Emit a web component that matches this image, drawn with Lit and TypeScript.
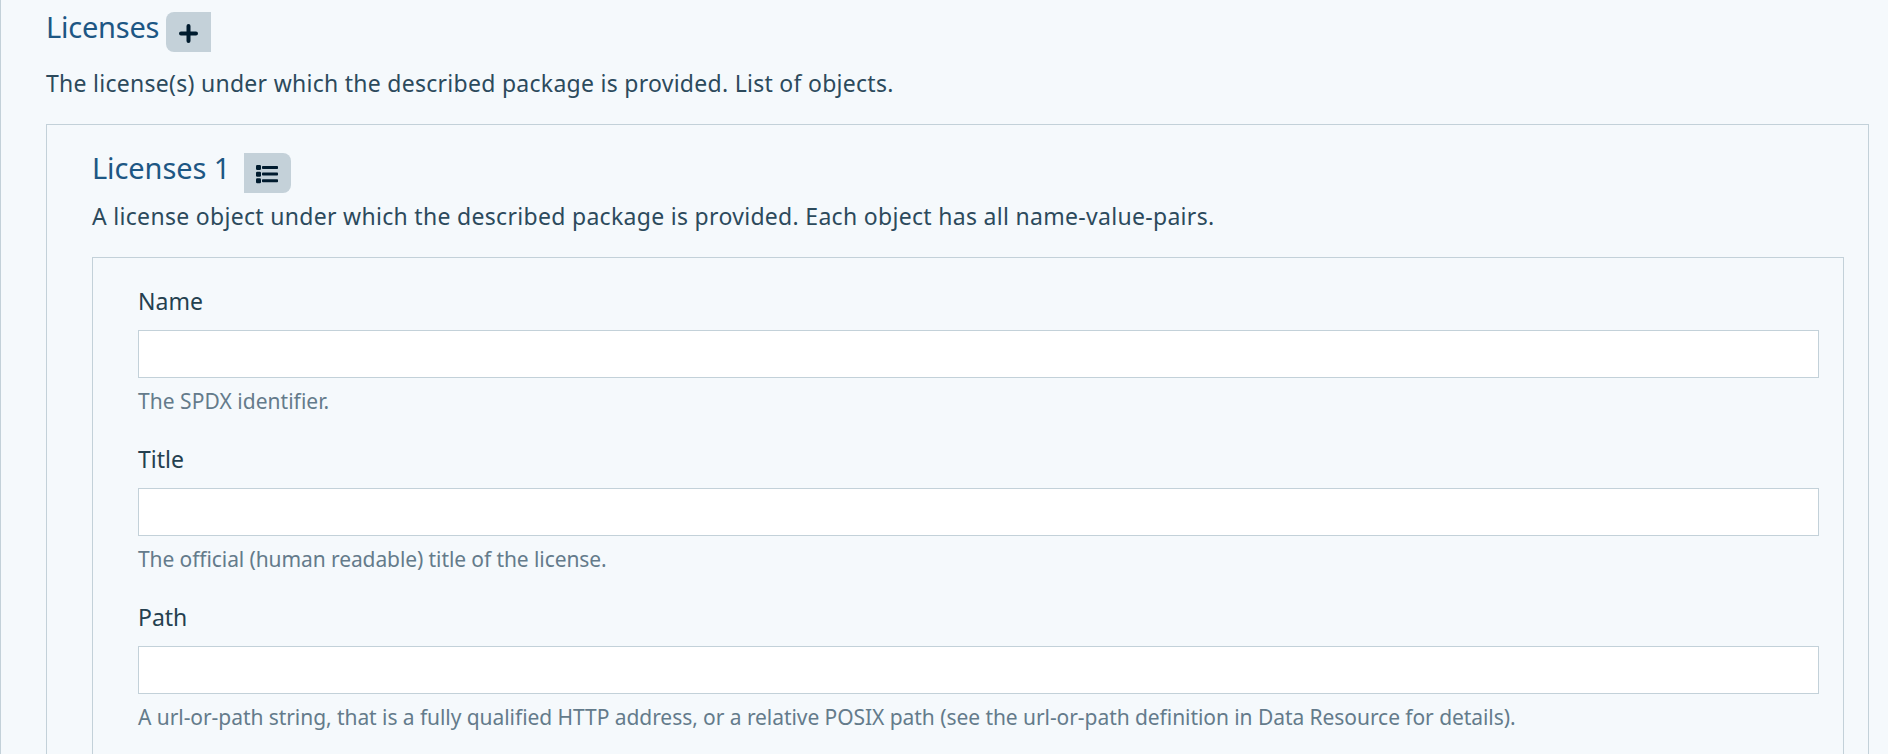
import { LitElement, html, css, svg } from "lit";
import { customElement, property } from "lit/decorators.js";
import { styleMap } from "lit/directives/style-map.js";

@customElement("form-field")
export class FormField extends LitElement {
  @property() label = "";
  @property() help = "";
  @property({ type: Number }) tracking = 0;

  static styles = css`
    :host { display: block; height: 158px; }
    .label {
      display: block; height: 36px; line-height: 36px; margin-bottom: 11px;
      font-size: 23px; color: #24404f;
    }
    .input {
      display: block; box-sizing: border-box; width: 100%; height: 48px; margin: 0;
      padding: 6px 12px; border: 1px solid #c3d1d9; border-radius: 0;
      background: #fff; font: inherit; outline: none;
    }
    .help {
      margin-top: 7px; line-height: 32px; font-size: 21px;
      color: #647b8b; white-space: nowrap;
    }
  `;

  render() {
    return html`
      <label class="label" for="field">${this.label}</label>
      <input class="input" id="field" type="text" />
      <div class="help" style=${styleMap({ letterSpacing: `${this.tracking}px` })}>${this.help}</div>
    `;
  }
}

const plusIcon = svg`
  <path d="M9.5 2v15M2 9.5h15" fill="none" stroke="currentColor" stroke-width="4" stroke-linecap="round" />`;

const listIcon = svg`
  <rect x="0" y="0" width="5" height="5" rx="1.2" />
  <rect x="0" y="6.7" width="5" height="5" rx="1.2" />
  <rect x="0" y="13.3" width="5" height="5" rx="1.2" />
  <rect x="6" y="1" width="16" height="3" rx="0.8" />
  <rect x="6" y="7.6" width="16" height="3" rx="0.8" />
  <rect x="6" y="14.3" width="16" height="3" rx="0.8" />`;

@customElement("app-root")
export class AppRoot extends LitElement {
  static styles = css`
    :host {
      display: block; box-sizing: border-box; height: 100vh; overflow: hidden;
      padding: 12px 19px 0 45px; border-left: 1px solid #c3d1d9;
      background: #f5f9fc; color: #2c4a5c;
      font-family: "Noto Sans", "Open Sans", sans-serif;
    }
    .head { display: flex; height: 40px; }
    .title {
      margin: 0; font-weight: 400; font-size: 29px; line-height: 30px;
      letter-spacing: -0.22px; color: #1d5784; white-space: nowrap;
    }
    .outer-title { width: 120px; }
    .inner-title { width: 152px; letter-spacing: -0.1px; }
    .btn {
      display: flex; align-items: center; justify-content: center;
      box-sizing: border-box; height: 40px; padding: 0; border: 0;
      background: #c4d1d9; color: #001b2e;
    }
    .add { width: 45px; border-radius: 8px 0 0 8px; }
    .list { width: 47px; border-radius: 0 8px 8px 0; }
    .icon { display: block; fill: currentColor; }
    .add .icon { margin-top: 2px; }
    .list .icon { margin: 2px 1px 0 0; }
    .text { margin: 0; font-size: 23px; line-height: 36px; letter-spacing: 0.305px; white-space: nowrap; }
    .intro { margin-top: 13px; letter-spacing: 0.275px; }
    .desc { margin-top: 5px; }
    .box { border: 1px solid #c3d1d9; border-bottom: 0; }
    .outer { margin-top: 23px; padding: 28px 24px 0 45px; height: 700px; }
    .inner { margin-top: 23px; padding: 25px 24px 0 45px; height: 600px; }
  `;

  private fields = [
    { label: "Name", help: "The SPDX identifier.", tracking: 0.04 },
    { label: "Title", help: "The official (human readable) title of the license.", tracking: -0.09 },
    {
      label: "Path",
      help: "A url-or-path string, that is a fully qualified HTTP address, or a relative POSIX path (see the url-or-path definition in Data Resource for details).",
      tracking: -0.06,
    },
  ];

  render() {
    return html`
      <div class="head">
        <h2 class="title outer-title">Licenses</h2>
        <button class="btn add" aria-label="Add">
          <svg class="icon" width="19" height="19" viewBox="0 0 19 19">${plusIcon}</svg>
        </button>
      </div>
      <p class="text intro">The license(s) under which the described package is provided. List of objects.</p>
      <section class="box outer">
        <div class="head">
          <h3 class="title inner-title">Licenses 1</h3>
          <button class="btn list" aria-label="Toggle">
            <svg class="icon" width="22" height="19" viewBox="0 0 22 19">${listIcon}</svg>
          </button>
        </div>
        <p class="text desc">A license object under which the described package is provided. Each object has all name-value-pairs.</p>
        <div class="box inner">
          ${this.fields.map((f) => html`<form-field .label=${f.label} .help=${f.help} .tracking=${f.tracking}></form-field>`)}
        </div>
      </section>
    `;
  }
}
